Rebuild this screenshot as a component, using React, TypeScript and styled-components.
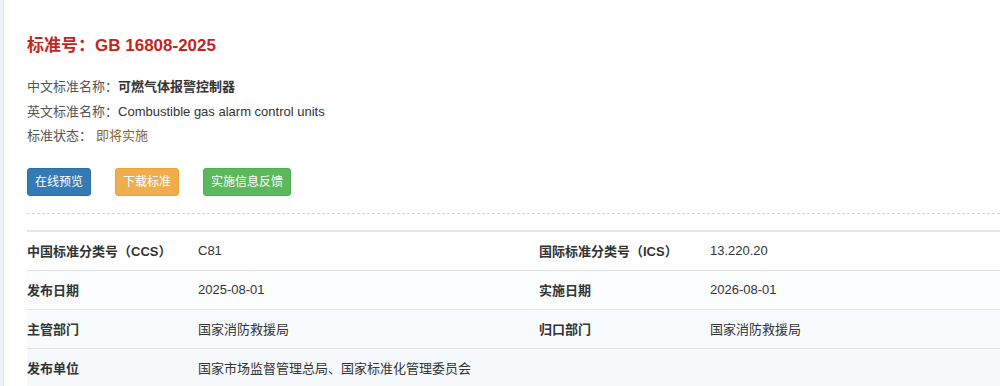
import React from "react";
import styled, { createGlobalStyle } from "styled-components";

const GlobalStyle = createGlobalStyle`
  html, body {
    margin: 0;
    padding: 0;
    background: #eef5fb;
    overflow: hidden;
  }
  body {
    font-family: "Liberation Sans", Arial, "Noto Sans CJK SC", sans-serif;
    color: #333;
    font-size: 13px;
  }
`;

const Page = styled.div`
  padding-left: 3px;
  height: 386px;
`;

const Panel = styled.div`
  background: #fff;
  border-left: 1px solid #d9e6f1;
  height: 386px;
  padding: 34px 0 0 23px;
  box-sizing: border-box;
`;

const Title = styled.h3`
  margin: 0;
  font-size: 17px;
  line-height: 24px;
  font-weight: bold;
  color: #c4261d;
`;

const InfoList = styled.div`
  margin-top: 17px;
`;

const InfoLine = styled.div`
  line-height: 24.5px;
  color: #333;
`;

const Label = styled.span`
  color: #555;
`;

const Strong = styled.span`
  font-weight: bold;
  color: #333;
`;

const Status = styled.span`
  color: #8a6630;
  margin-left: 4px;
`;

const Actions = styled.div`
  display: flex;
  gap: 24px;
  margin-top: 19px;
`;

const tones = {
  primary: { bg: "#337ab7", border: "#2e6da4" },
  warning: { bg: "#f0ad4e", border: "#eea236" },
  success: { bg: "#5cb85c", border: "#4cae4c" },
};

const Button = styled.button<{ $tone: keyof typeof tones }>`
  height: 28px;
  padding: 0 7px;
  font-family: inherit;
  font-size: 12px;
  line-height: 26px;
  color: #fff;
  background: ${(p) => tones[p.$tone].bg};
  border: 1px solid ${(p) => tones[p.$tone].border};
  border-radius: 3px;
  cursor: pointer;
`;

const Divider = styled.div`
  margin-top: 17px;
  border-top: 1px dashed #d4d4d4;
`;

const Table = styled.table`
  margin-top: 16px;
  width: 100%;
  border-collapse: collapse;
  border-top: 2px solid #e6e6e6;
  table-layout: fixed;
`;

const Row = styled.tr<{ $bg: string }>`
  background: ${(p) => p.$bg};
  border-top: 1px solid #e2e2e2;
  &:first-child {
    border-top: none;
  }
`;

const Th = styled.td`
  width: 171px;
  height: 38px;
  padding: 0;
  font-weight: bold;
  color: #333;
  vertical-align: middle;
`;

const Td = styled.td<{ $wide?: boolean }>`
  width: ${(p) => (p.$wide ? "auto" : "341px")};
  padding: 0;
  color: #333;
  vertical-align: middle;
`;

const rows = [
  { bg: "#ffffff", a: ["中国标准分类号（CCS）", "C81"], b: ["国际标准分类号（ICS）", "13.220.20"] },
  { bg: "#fbfdfe", a: ["发布日期", "2025-08-01"], b: ["实施日期", "2026-08-01"] },
  { bg: "#f8fbfd", a: ["主管部门", "国家消防救援局"], b: ["归口部门", "国家消防救援局"] },
  { bg: "#f5f9fc", a: ["发布单位", "国家市场监督管理总局、国家标准化管理委员会"], b: ["", ""] },
];

export default function App() {
  return (
    <>
      <GlobalStyle />
      <Page>
        <Panel>
          <Title>标准号：GB 16808-2025</Title>
          <InfoList>
            <InfoLine>
              <Label>中文标准名称：</Label>
              <Strong>可燃气体报警控制器</Strong>
            </InfoLine>
            <InfoLine>
              <Label>英文标准名称：</Label>
              Combustible gas alarm control units
            </InfoLine>
            <InfoLine>
              <Label>标准状态：</Label>
              <Status>即将实施</Status>
            </InfoLine>
          </InfoList>
          <Actions>
            <Button $tone="primary">在线预览</Button>
            <Button $tone="warning">下载标准</Button>
            <Button $tone="success">实施信息反馈</Button>
          </Actions>
          <Divider />
          <Table>
            <tbody>
              {rows.map((r, i) => (
                <Row key={i} $bg={r.bg}>
                  <Th>{r.a[0]}</Th>
                  <Td>{r.a[1]}</Td>
                  <Th>{r.b[0]}</Th>
                  <Td $wide>{r.b[1]}</Td>
                </Row>
              ))}
            </tbody>
          </Table>
        </Panel>
      </Page>
    </>
  );
}
